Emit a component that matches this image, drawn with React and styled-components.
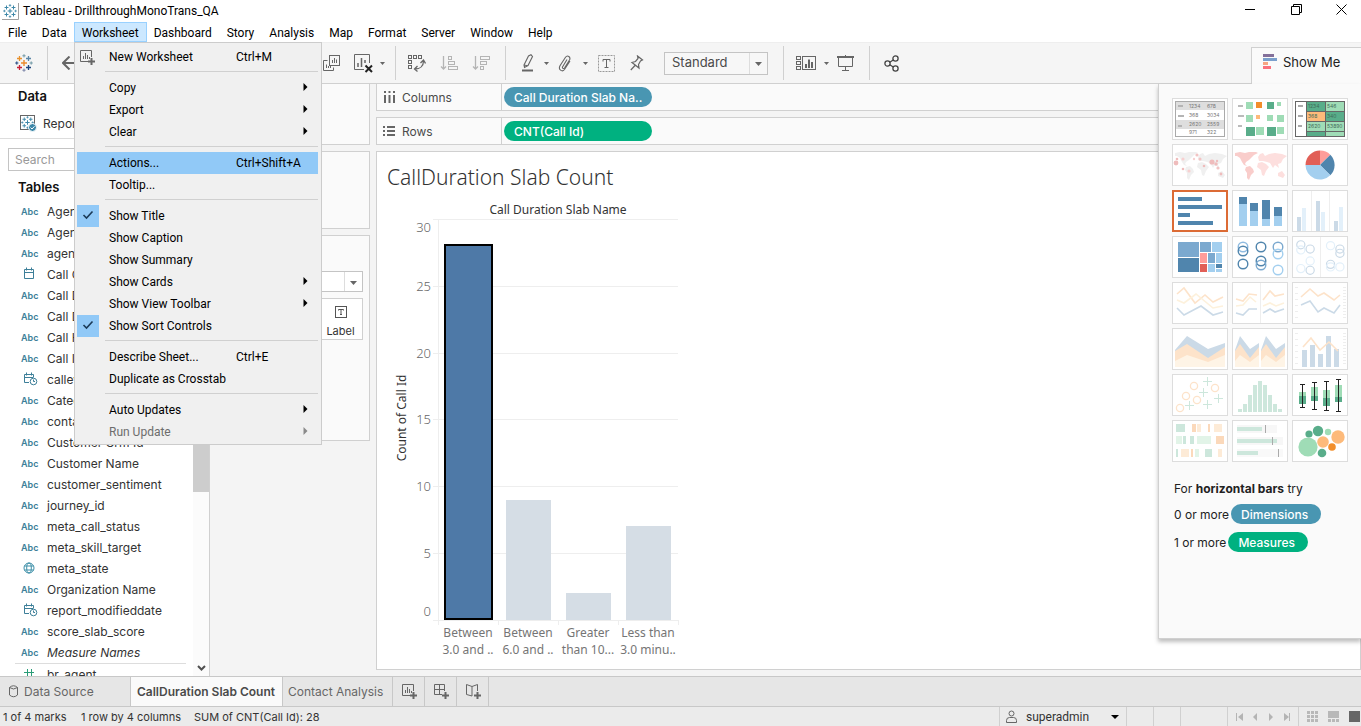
import React from 'react'
import styled, {createGlobalStyle, css} from 'styled-components'

const ui = 'Roboto, "Open Sans", sans-serif'
const book = 'Inter, Roboto, sans-serif'
const light = '"Noto Sans", "Open Sans", sans-serif'

const line = '#d0d0d0'
const ink = '#333333'
const iconGrey = '#666666'
const dimension = '#4996b2'
const measure = '#00b180'

const GlobalStyle = createGlobalStyle`
    * {box-sizing: border-box;}
    body {margin: 0; overflow: hidden;}
    button, input, select {font: inherit; color: inherit; margin: 0;}
    button {background: none; border: 0; padding: 0;}
    svg {display: block; flex: none;}
`

const Window = styled.div`
    height: 100vh;
    display: flex;
    flex-direction: column;
    background-color: #ffffff;
    color: ${ink};
    font-family: ${book};
    font-size: 12px;
`

/* ---------- title and menu bar ---------- */

const TitleBar = styled.header`
    height: 22px;
    display: flex;
    align-items: center;
    padding-left: 2px;
    font-family: ${ui};
    color: #000000;
`

const WindowTitle = styled.h1`
    margin: 0 auto 0 4px;
    font-size: 12px;
    font-weight: 400;
    line-height: 22px;
`

const WindowButton = styled.button`
    align-self: flex-start;
    width: ${props => props.$last ? 42 : 46}px;
    height: 18px;
    padding-left: ${props => props.$last ? 2 : 0}px;
    display: flex;
    align-items: center;
    justify-content: center;
`

const MenuBar = styled.nav`
    position: relative;
    height: 20px;
    display: flex;
    padding-left: 1px;
    font-family: ${ui};
    color: #000000;
`

const MenuTitle = styled.button`
    height: 20px;
    padding: 0 7px;
    border: 1px solid transparent;
    border-left-width: 0;
    line-height: 20px;
    ${props => props.$open && css`
        background-color: #cce8ff;
        border-color: #99d1ff;
        box-shadow: -1px 0 0 #99d1ff;
    `}
`

const DropMenu = styled.div`
    position: absolute;
    top: 20px;
    left: 74px;
    z-index: 5;
    width: 248px;
    padding: 3px 3px 1px 2px;
    border: 1px solid #cccccc;
    background-color: #f0f0f0;
`

const MenuItem = styled.button`
    width: 100%;
    height: 22px;
    display: grid;
    grid-template-columns: 22px 127px 1fr 15px;
    align-items: center;
    text-align: left;
    line-height: 22px;
    background-color: ${props => props.$active ? '#91c9f7' : 'transparent'};
    color: ${props => props.disabled ? '#6d6d6d' : '#000000'};
`

const MenuMark = styled.span`
    width: 22px;
    height: 22px;
    display: flex;
    align-items: center;
    justify-content: center;
    background-color: ${props => props.$checked ? '#91c9f7' : 'transparent'};
`

const MenuLabel = styled.span`
    padding-left: 10px;
    white-space: nowrap;
`

const MenuShortcut = styled.span`
    padding-left: 10px;
    white-space: nowrap;
`

const MenuRule = styled.hr`
    height: 1px;
    margin: 3px 0 5px 28px;
    border: 0;
    background-color: ${line};
`

/* ---------- toolbar ---------- */

const Toolbar = styled.div`
    height: 42px;
    display: flex;
    align-items: center;
    background-color: #f5f5f5;
    border-top: 1px solid #eeeeee;
    border-bottom: 1px solid ${line};
`

const ToolGroup = styled.div`
    display: flex;
    align-items: center;
    height: 34px;
    padding: 0 ${props => props.$right || 0}px 0 ${props => props.$left || 0}px;
    min-width: ${props => props.$min || 0}px;
    border-right: 1px solid ${props => props.$open ? 'transparent' : line};
`

const Tool = styled.button`
    width: ${props => props.$wide ? 32 : 30}px;
    height: 30px;
    display: flex;
    align-items: center;
    justify-content: center;
    margin-left: ${props => props.$push ? 'auto' : 0};
`

const ToolCaret = styled.button`
    width: ${props => props.$wide ? 10 : 8}px;
    height: 30px;
    display: flex;
    align-items: center;
    justify-content: center;
`

const SelectBox = styled.label`
    position: relative;
    display: flex;
    height: ${props => props.$small ? 21 : 23}px;
    width: ${props => props.$small ? '100%' : '104px'};
    border: 1px solid #c4c4c4;
    background-color: ${props => props.$small ? '#ffffff' : '#f7f7f7'};
    select {
        flex: 1;
        appearance: none;
        border: 0;
        outline: 0;
        background: none;
        padding: 0 18px 2px 7px;
        font-size: 13px;
        color: #4a4a4a;
    }
    svg {
        position: absolute;
        right: 5px;
        top: 9px;
        pointer-events: none;
    }
    &:after {
        content: '';
        position: absolute;
        top: 0;
        bottom: 0;
        right: 17px;
        border-left: 1px solid #dddddd;
    }
`

const ShowMeTab = styled.button`
    align-self: flex-end;
    display: flex;
    align-items: center;
    gap: 5px;
    width: 110px;
    height: 37px;
    margin: 0 0 -1px auto;
    padding: 0 0 8px 11px;
    border: solid ${line};
    border-width: 1px 0 0 1px;
    background-color: #fafafa;
    font-size: 13px;
    color: #222222;
    white-space: nowrap;
`

/* ---------- body ---------- */

const Body = styled.main`
    position: relative;
    flex: 1;
    min-height: 0;
    display: flex;
    background-color: #f4f4f4;
`

const DataPane = styled.aside`
    width: 210px;
    display: flex;
    flex-direction: column;
    background-color: #ffffff;
    border-right: 1px solid ${line};
`

const PaneTitle = styled.h2`
    margin: 0;
    padding: ${props => props.$first ? '2px 0 2px 18px' : '6px 0 2px 18px'};
    font-size: 13px;
    font-weight: 600;
    line-height: 21px;
    color: #111111;
`

const SourceRow = styled.div`
    display: flex;
    align-items: center;
    gap: 6px;
    height: 30px;
    padding: 0 0 0 20px;
    border-bottom: 1px solid #dddddd;
`

const SearchInput = styled.input`
    width: 160px;
    height: 23px;
    margin: 9px 0 0 8px;
    padding: 0 6px;
    border: 1px solid #c4c4c4;
    &::placeholder {color: #999999; opacity: 1;}
`

const FieldArea = styled.div`
    flex: 1;
    min-height: 0;
    display: flex;
`

const FieldList = styled.ul`
    flex: 1;
    margin: 0;
    padding: 1px 0 0;
    overflow: hidden;
    list-style: none;
`

const Field = styled.li`
    height: 21px;
    display: grid;
    grid-template-columns: 26px 1fr;
    align-items: center;
    padding: 0 0 1px 21px;
    white-space: nowrap;
    font-style: ${props => props.$italic ? 'italic' : 'normal'};
`

const FieldRule = styled.li`
    height: 1px;
    margin: 0 7px 0 15px;
    background-color: #dddddd;
`

const Abc = styled.span`
    font-size: 9px;
    font-weight: 600;
    font-style: normal;
    color: #3d7f99;
`

const FieldIcon = styled.span`
    padding-left: 2px;
`

const ScrollTrack = styled.div`
    width: 16px;
    display: flex;
    flex-direction: column;
    justify-content: space-between;
    align-items: center;
    padding-bottom: 4px;
    background-color: #fbfbfb;
`

const ScrollThumb = styled.div`
    width: 16px;
    height: 292px;
    background-color: #cdcdcd;
`

const Cards = styled.section`
    width: 167px;
    display: flex;
    flex-direction: column;
    gap: 6px;
    padding: 0 7px;
`

const Card = styled.div`
    height: ${props => props.$height}px;
    border: 1px solid ${line};
    border-top-width: ${props => props.$flat ? 0 : 1}px;
    background-color: #fafafa;
`

const MarksCard = styled(Card)`
    display: flex;
    flex-direction: column;
    align-items: flex-end;
    gap: 6px;
    padding: 35px 6px 0;
`

const MarkButton = styled.button`
    width: 45px;
    height: 42px;
    display: flex;
    flex-direction: column;
    align-items: center;
    justify-content: center;
    gap: 6px;
    padding-top: 6px;
    border: 1px solid ${line};
    background-color: #ffffff;
    font-size: 11px;
`

const Workspace = styled.section`
    flex: 1;
    min-width: 0;
    display: flex;
    flex-direction: column;
    gap: 6px;
    padding-bottom: 6px;
`

const Shelf = styled.div`
    height: ${props => props.$flat ? 27 : 28}px;
    display: flex;
    border: 1px solid ${line};
    border-top-width: ${props => props.$flat ? 0 : 1}px;
    background-color: #fafafa;
    margin-left: -1px;
`

const ShelfLabel = styled.div`
    width: 125px;
    display: flex;
    align-items: center;
    gap: 6px;
    padding-left: 6px;
    border-right: 1px solid ${line};
    color: #4a4a4a;
`

const Pill = styled.button`
    height: 20px;
    padding: 0 ${props => props.$long ? 10 : 13}px 0 10px;
    min-width: ${props => props.$long ? 148 : 0}px;
    border-radius: 10px;
    background-color: ${props => props.$measure ? measure : dimension};
    color: #ffffff;
    text-align: left;
    white-space: nowrap;
    font-weight: 500;
    line-height: 19px;
`

const ShelfDrop = styled.div`
    display: flex;
    align-items: center;
    padding-left: 2px;
`

const Sheet = styled.div`
    flex: 1;
    min-height: 0;
    margin-left: -1px;
    padding: 11px 10px 0;
    border: 1px solid ${line};
    background-color: #ffffff;
`

const SheetTitle = styled.h2`
    margin: 0;
    font-family: ${light};
    font-size: 21px;
    font-weight: 300;
    line-height: 28px;
    color: #333333;
`

const Chart = styled.svg`
    margin: 9px 0 0 1px;
    font-family: ${light};
    font-size: 12px;
`

const TickText = styled.text`
    fill: #666666;
    font-size: 13px;
    font-weight: 300;
`

const CategoryText = styled.text`
    fill: #757575;
    font-size: 12px;
    text-anchor: middle;
`

const AxisText = styled.text`
    fill: #333333;
    text-anchor: middle;
`

/* ---------- show me ---------- */

const ShowMePanel = styled.aside`
    position: absolute;
    top: 0;
    right: 0;
    width: 203px;
    padding: 14px 13px 82px;
    border: solid ${line};
    border-width: 0 0 1px 1px;
    background-color: #fafafa;
    box-shadow: 0 3px 4px rgba(0, 0, 0, .25);
`

const ThumbGrid = styled.div`
    display: grid;
    grid-template-columns: repeat(3, 56px);
    gap: 4px;
    margin-bottom: 14px;
`

const Thumb = styled.button`
    width: 56px;
    height: 42px;
    background-color: #ffffff;
    box-shadow: inset 0 0 0 ${props => props.$selected ? '2px #dc6b35' : '1px #dddddd'};
`

const Hint = styled.p`
    display: flex;
    align-items: center;
    gap: 2px;
    height: ${props => props.$head ? 24 : 28}px;
    margin: 0 0 0 2px;
    color: #222222;
    white-space: nowrap;
`

/* ---------- tabs and status ---------- */

const TabBar = styled.nav`
    height: 31px;
    display: flex;
    border: solid #c8c8c8;
    border-width: 1px 0;
    background-color: #e6e6e6;
`

const SheetTab = styled.button`
    display: flex;
    align-items: center;
    gap: 6px;
    width: ${props => props.$width}px;
    padding-left: ${props => props.$pad}px;
    border-right: 1px solid #c8c8c8;
    background-color: ${props => props.$active ? '#fafafa' : 'transparent'};
    color: ${props => props.$active ? '#4a4a4a' : '#666666'};
    font-weight: ${props => props.$active ? 600 : 400};
    white-space: nowrap;
`

const StatusBar = styled.footer`
    height: 19px;
    display: flex;
    align-items: stretch;
    background-color: #ebebeb;
    font-size: 11px;
    line-height: 20px;
`

const StatusText = styled.span`
    padding-left: 3px;
    min-width: ${props => props.$min}px;
    white-space: nowrap;
`

const StatusCell = styled.div`
    display: flex;
    align-items: center;
    justify-content: space-between;
    width: ${props => props.$width}px;
    padding: 0 ${props => props.$right || 0}px 0 ${props => props.$left || 0}px;
    border-left: 1px solid ${line};
    margin-left: ${props => props.$push ? 'auto' : 0};
`

const UserName = styled.span`
    margin: 0 auto 0 9px;
    font-family: ${ui};
    font-size: 12px;
`

/* ---------- icons ---------- */

const Icon = ({w = 18, h = 18, children, color = iconGrey, ...rest}) => (
    <svg width={w} height={h} viewBox={`0 0 ${w} ${h}`} fill="none" stroke={color} aria-hidden="true" {...rest}>
        {children}
    </svg>
)

const Plus = ({x, y, r, c, s = 1}) => (
    <path d={`M${x - r} ${y}H${x + r}M${x} ${y - r}V${y + r}`} stroke={c} strokeWidth={s}/>
)

const Caret = ({w = 5, color = iconGrey}) => (
    <svg width={w} height={Math.ceil(w / 2)} viewBox="0 0 6 3" preserveAspectRatio="none" aria-hidden="true">
        <path d="M0 0H6L3 3Z" fill={color}/>
    </svg>
)

const logoColors = ['#eb8b2d', '#e8912d', '#5c87a8', '#c72037', '#1f457e', '#7199a6', '#7b84a8', '#1f457e', '#7099a6']

const Logo = ({size = 18, mono}) => {
    const c = mono ? logoColors.map(() => '#3d87a8') : logoColors
    return (
        <svg width={size} height={size} viewBox="0 0 18 18" aria-hidden="true">
            <Plus x={9} y={9} r={3} c={c[0]} s={1.4}/>
            <Plus x={4.5} y={4.5} r={2.5} c={c[1]} s={1.3}/>
            <Plus x={13.5} y={4.5} r={2.5} c={c[2]} s={1.3}/>
            <Plus x={4.5} y={13.5} r={2.5} c={c[3]} s={1.3}/>
            <Plus x={13.5} y={13.5} r={2.5} c={c[4]} s={1.3}/>
            <Plus x={9} y={1.8} r={1.6} c={c[5]}/>
            <Plus x={9} y={16.2} r={1.6} c={c[6]}/>
            <Plus x={1.8} y={9} r={1.6} c={c[7]}/>
            <Plus x={16.2} y={9} r={1.6} c={c[8]}/>
        </svg>
    )
}

const AppIcon = () => (
    <svg width="17" height="17" viewBox="0 0 17 17" aria-hidden="true">
        <path d="M0 16.5H16.5V0" fill="none" stroke="#a0a0a0"/>
        <svg x="1" y="1" width="14" height="14" viewBox="0 0 18 18"><Logo mono/></svg>
    </svg>
)

const SourceIcon = () => (
    <Icon w={17} h={17}>
        <rect x="0.5" y="0.5" width="14" height="14"/>
        <svg x="1" y="1" width="13" height="13" viewBox="0 0 18 18"><Logo mono/></svg>
        <circle cx="12.5" cy="12.5" r="4" fill="#3d87a8" stroke="#ffffff"/>
        <path d="M10.5 12.5L12 14L14.5 11.3" stroke="#ffffff"/>
    </Icon>
)

const NewSheetIcon = () => (
    <Icon w={16} h={15}>
        <path d="M10 11.5H0.5V0.5H11.5V7"/>
        <path d="M3.5 9V6M5.5 9V3M7.5 9V5M9.5 9V7"/>
        <path d="M8 11.5H15M11.5 8V15" strokeWidth="2"/>
    </Icon>
)

const NewDashboardIcon = () => (
    <Icon w={16} h={15}>
        <path d="M8 10.5H0.5V0.5H10.5V7M0.5 5.5H10.5M5.5 0.5V10.5"/>
        <path d="M8 11.5H15M11.5 8V15" strokeWidth="2"/>
    </Icon>
)

const NewStoryIcon = () => (
    <Icon w={16} h={15}>
        <path d="M6 12L0.5 10.5V0.5L6 2.5L11.5 0.5V7M6 2.5V12"/>
        <path d="M8 11.5H15M11.5 8V15" strokeWidth="2"/>
    </Icon>
)

const DuplicateIcon = () => (
    <Icon w={18} h={16}>
        <rect x="6.5" y="0.5" width="10" height="10"/>
        <path d="M4.5 5.5H0.5V15.5H10.5V12.5M9.5 8V5M11.5 8V3M13.5 8V4.5M3.5 13V9.5M5.5 13V11M7.5 13V11"/>
    </Icon>
)

const ClearIcon = () => (
    <Icon w={19} h={19}>
        <path d="M10 15.5H0.5V0.5H15.5V9"/>
        <path d="M4 13V9M7.5 13V4M11 9V6" strokeWidth="1.5"/>
        <path d="M11.5 11.5L18 18M18 11.5L11.5 18" stroke="#222222" strokeWidth="2"/>
    </Icon>
)

const SwapIcon = () => (
    <Icon w={18} h={18}>
        <rect x="0.5" y="1.5" width="3" height="3"/>
        <rect x="5.5" y="1.5" width="3" height="3"/>
        <rect x="10.5" y="1.5" width="3" height="3"/>
        <rect x="0.5" y="6.5" width="3" height="3"/>
        <rect x="0.5" y="11.5" width="3" height="3"/>
        <path d="M15.5 7C15.5 12 12 15 7 15M12.5 9L15.5 6L17.5 9.5M9.5 12L6.5 15L9.5 17.5" strokeWidth="1.3"/>
    </Icon>
)

const SortIcon = ({desc}) => (
    <Icon w={18} h={16} color="#b4b4b4">
        <path d="M3.5 1V14M1 11.5L3.5 14L6 11.5" strokeWidth="1.3"/>
        <rect x="8.5" y="1.5" width={desc ? 9 : 3} height="3"/>
        <rect x="8.5" y="6.5" width="6" height="3"/>
        <rect x="8.5" y="11.5" width={desc ? 3 : 9} height="3"/>
    </Icon>
)

const HighlightIcon = () => (
    <Icon w={13} h={18}>
        <path d="M3 11L7.5 2L10 0.8L11.5 2.5L7 11.5L3.5 13.5ZM3 11L6.8 11.8" strokeWidth="1.1"/>
        <path d="M1 16.5H12" strokeWidth="2"/>
    </Icon>
)

const ClipIcon = () => (
    <Icon w={14} h={17}>
        <path d="M9 4.5L4.5 12C4 13.5 5.8 14 6.5 13L11.5 5C13 2 9.5 -0.5 7.5 2.3L2 10.8C0 14.5 4 17.5 6.5 14.5L12 6" strokeWidth="1.1"/>
    </Icon>
)

const TextIcon = ({size = 17, solid}) => (
    <Icon w={size} h={size} color={solid ? '#555555' : '#999999'}>
        <rect x="0.5" y="0.5" width={size - 1} height={size - 1} strokeDasharray={solid ? undefined : '2 1'}/>
        {solid
            ? <path d="M3.5 4.5V3.5H8.5V4.5M6 3.5V8.5M5 8.5H7"/>
            : <path d="M5 6.5V4.5H12V6.5M8.5 4.5V12.5M6.5 12.5H10.5" stroke={iconGrey}/>}
    </Icon>
)

const PinIcon = () => (
    <Icon w={14} h={16}>
        <path d="M7.5 1L12.5 5L10.5 6L8.5 9.5L9 13L2 7.5L5.5 6.5L8 3.5ZM5 10.5L0.8 15" strokeWidth="1.2"/>
    </Icon>
)

const ShowCardsIcon = () => (
    <Icon w={20} h={15}>
        <rect x="0.5" y="0.5" width="4" height="3"/>
        <rect x="0.5" y="5.5" width="4" height="3"/>
        <rect x="0.5" y="10.5" width="4" height="3"/>
        <rect x="6.5" y="0.5" width="13" height="13"/>
        <path d="M10 12V8M13 12V3.5M16 12V6" strokeWidth="2"/>
    </Icon>
)

const PresentIcon = () => (
    <Icon w={17} h={17}>
        <path d="M0 2H17" strokeWidth="2"/>
        <path d="M1.5 2V11.5H15.5V2M8.5 0V1M8.5 11.5V15.5M5 15.5H12"/>
    </Icon>
)

const ShareIcon = () => (
    <Icon w={16} h={17} color="#444444">
        <circle cx="3.5" cy="8.5" r="2.6" strokeWidth="1.3"/>
        <circle cx="11.5" cy="3.5" r="2.6" strokeWidth="1.3"/>
        <circle cx="11.5" cy="13.5" r="2.6" strokeWidth="1.3"/>
        <path d="M5.8 7.2L9.2 5M5.8 9.8L9.2 12" strokeWidth="1.3"/>
    </Icon>
)

const ShowMeIcon = () => (
    <svg width="15" height="16" viewBox="0 0 15 16" aria-hidden="true">
        <rect y="0" width="11" height="3" fill="#84709a"/>
        <rect y="4" width="14" height="3" fill="#7ba0cc"/>
        <rect y="8" width="5" height="3" fill="#f6a582"/>
        <rect y="12" width="8" height="3" fill="#f9717d"/>
    </svg>
)

const CalendarIcon = ({time}) => (
    <Icon w={15} h={14} color="#3d7f99">
        <path d={time ? 'M6 10.5H1.5V2.5H10.5V5M1.5 5.5H10.5M3.5 0.5V3.5M8.5 0.5V3.5' : 'M1.5 2.5H10.5V11.5H1.5ZM1.5 5.5H10.5M3.5 0.5V3.5M8.5 0.5V3.5'}/>
        {time && <><circle cx="10.5" cy="9.5" r="3.3"/><path d="M10.5 7.5V9.5H12"/></>}
    </Icon>
)

const GlobeIcon = () => (
    <Icon w={12} h={12} color="#3d8fa8">
        <circle cx="6" cy="6" r="5"/>
        <ellipse cx="6" cy="6" rx="2.3" ry="5"/>
        <path d="M1.5 4H10.5M1.5 8H10.5"/>
    </Icon>
)

const Check = () => (
    <Icon w={12} h={12} color="#1b3a57"><path d="M1.5 5L4.5 8L10.5 1.5" strokeWidth="1.6"/></Icon>
)

const SubArrow = ({off}) => (
    <svg width="5" height="10" viewBox="0 0 5 10" aria-hidden="true">
        <path d="M0.5 0L4.5 4L0.5 8Z" fill={off ? '#8a8a8a' : '#000000'}/>
    </svg>
)

/* ---------- show me thumbnails ---------- */

const Bars = ({data, fill}) => data.map(([x, y, w, h, c], i) => (
    <rect key={i} x={x} y={y} width={w} height={h} fill={c || fill}/>
))

const Lines = ({data}) => data.map(([points, c], i) => (
    <polyline key={i} points={points} fill="none" stroke={c} strokeWidth="1.6"/>
))

const Areas = ({data}) => data.map(([points, c], i) => <polygon key={i} points={points} fill={c}/>)

const Rings = ({data}) => data.map(([x, y, c], i) => (
    <circle key={i} cx={x} cy={y} r="4.8" fill="none" stroke={c} strokeWidth="1.4"/>
))

const Dots = ({data}) => data.map(([x, y, r, c], i) => <circle key={i} cx={x} cy={y} r={r} fill={c}/>)

const tinyNumbers = [['1234', '678'], ['368', '3034'], ['2620', '2559'], ['971', '322']]
const heatNumbers = [['1234', '546'], ['368', '340'], ['2620', '53890']]

const TextTable = () => (
    <g fontSize="5" fill="#777777" fontFamily={book}>
        <rect x="3.5" y="3.5" width="49" height="35" fill="#ffffff" stroke="#aaaaaa"/>
        <Bars fill="#dedede" data={[[4, 4, 48, 8], [4, 22, 48, 9]]}/>
        <Bars fill="#b4b4b4" data={[[6, 7, 5, 2], [6, 17, 6, 2], [6, 27, 4, 2]]}/>
        {tinyNumbers.map(([a, b], i) => (
            <React.Fragment key={a}>
                <text x="17" y={10 + i * 9 - (i === 3 ? 1 : 0)}>{a}</text>
                <text x="35" y={10 + i * 9 - (i === 3 ? 1 : 0)}>{b}</text>
            </React.Fragment>
        ))}
    </g>
)

const HighlightTable = () => (
    <g fontSize="5" fill="#3f6b58" fontFamily={book}>
        <rect x="3.5" y="3.5" width="49" height="35" fill="#ffffff" stroke="#666666"/>
        <Bars data={[
            [15, 4, 18, 9, '#59ad8a'], [34, 4, 18, 9, '#9fdcb6'], [15, 14, 18, 9, '#fdba7a'], [34, 14, 18, 9, '#59ad8a'],
            [15, 24, 18, 9, '#9fdcb6'], [34, 24, 18, 9, '#9fdcb6'], [15, 34, 18, 4, '#59ad8a'], [34, 34, 18, 4, '#9fdcb6'],
            [6, 7, 5, 2, '#aaaaaa'], [6, 17, 5, 2, '#aaaaaa'], [6, 27, 4, 2, '#aaaaaa']
        ]}/>
        <path d="M14.5 4V38M33.5 4V38M14 13.5H52M14 23.5H52M14 33.5H52" stroke="#666666"/>
        {heatNumbers.map(([a, b], i) => (
            <React.Fragment key={a}>
                <text x="16" y={10 + i * 10}>{a}</text>
                <text x="35" y={10 + i * 10}>{b}</text>
            </React.Fragment>
        ))}
    </g>
)

const continents = [
    'M3 9L8 8L13 9L17 8L24 8L26 9L22 11L20 13L17 16L14 18L13 20L15 22L12 21L10 18L8 14L5 12L3 12Z',
    'M14 23L18 22L21 25L22 28L19 31L17 36L15 34L15 29L13 26Z',
    'M26 13L28 10L31 9L33 12L37 10L43 9L50 10L55 12L51 15L49 19L46 20L47 24L43 21L41 24L38 19L35 18L31 17L27 17Z',
    'M26 19L30 18L34 20L37 23L34 27L32 32L30 31L29 26L25 23Z',
    'M46 29L50 27L53 31L51 34L46 32Z'
]

const WorldMap = ({left, right}) => continents.map((d, i) => (
    <path key={d} d={d} fill={i < 2 ? left : right}/>
))

const pale = {blue: '#cbdae7', sky: '#e3f0fa', orange: '#fde3ca', cream: '#fdf1dc', green: '#cde7dc', mint: '#e2f4e8'}

const thumbs = [
    {name: 'Text table', art: <TextTable/>},
    {name: 'Heat map', art: <Bars data={[
        [6, 7, 5, 2, '#bbbbbb'], [6, 17, 6, 2, '#bbbbbb'], [6, 27, 4, 2, '#bbbbbb'],
        [14, 4, 7, 7, '#9fdcb6'], [24, 4, 6, 6, '#f28e2b'], [35, 4, 7, 7, '#59ad8a'], [45, 4, 4, 4, '#9fdcb6'],
        [14, 17, 7, 7, '#9fdcb6'], [24, 17, 4, 4, '#fdba7a'], [35, 17, 6, 6, '#9fdcb6'], [45, 17, 7, 7, '#9fdcb6'],
        [14, 29, 9, 9, '#59ad8a'], [24, 29, 8, 8, '#9fdcb6'], [35, 29, 9, 9, '#59ad8a'], [45, 29, 7, 7, '#9fdcb6']
    ]}/>},
    {name: 'Highlight table', art: <HighlightTable/>},
    {name: 'Symbol map', art: <><WorldMap left="#f0f0f0" right="#f0f0f0"/><Dots data={[
        [4, 19, 2.4, '#efbcbc'], [5, 15, 1.3, '#efbcbc'], [11, 15, 1.6, '#f7d0d0'], [11, 25, 1.3, '#efbcbc'], [17, 27, 1.6, '#f7d0d0'],
        [25, 11, 1.6, '#f2c4c4'], [22, 15, 1.2, '#f7d0d0'], [28, 15, 1.6, '#f2c4c4'], [32, 22, 1.3, '#efbcbc'],
        [40, 18, 2.6, '#efbcbc'], [44, 20, 1.7, '#efbcbc'], [46, 24, 1.6, '#f2c4c4'], [49, 30, 1.4, '#efbcbc'], [45, 17, 1.2, '#efbcbc']
    ]}/></>},
    {name: 'Map', art: <WorldMap left="#f9cdcb" right="#fddfde"/>},
    {name: 'Pie chart', art: <>
        <path d="M28 21V6.5A14.5 14.5 0 0 1 38.3 10.7Z" fill="#ff9d9a"/>
        <path d="M28 21L38.3 10.7A14.5 14.5 0 0 1 38.3 31.3Z" fill="#5085ad"/>
        <path d="M28 21L38.3 31.3A14.5 14.5 0 0 1 13.5 21Z" fill="#a3cfef"/>
        <path d="M28 21H13.5A14.5 14.5 0 0 1 28 6.5Z" fill="#e15f57"/>
    </>},
    {name: 'Horizontal bars', selected: true, art: <Bars fill="#5085ad" data={[[6, 7, 24, 4], [6, 15, 44, 4], [6, 23, 12, 4], [6, 31, 35, 4]]}/>},
    {name: 'Stacked bars', art: <Bars data={[
        [7, 7, 8, 7, '#5085ad'], [7, 14, 8, 22, '#a3cfef'], [18, 13, 8, 8, '#5085ad'], [18, 21, 8, 15, '#a3cfef'],
        [30, 10, 8, 19, '#5085ad'], [30, 29, 8, 7, '#a3cfef'], [42, 17, 8, 9, '#5085ad'], [42, 26, 8, 10, '#a3cfef']
    ]}/>},
    {name: 'Side-by-side bars', art: <Bars data={[
        [19, 1, 1, 40, '#eeeeee'], [37, 1, 1, 40, '#eeeeee'],
        [5, 27, 4, 14, pale.blue], [10, 18, 4, 23, pale.sky], [24, 11, 4, 30, pale.blue], [29, 22, 4, 19, pale.sky],
        [42, 31, 4, 10, pale.blue], [47, 17, 4, 24, pale.sky]
    ]}/>},
    {name: 'Treemap', art: <Bars data={[
        [6, 6, 21, 15, '#7ba9cf'], [6, 22, 21, 14, '#5085ad'], [28, 6, 11, 10, '#7ba9cf'], [40, 6, 10, 10, '#a3cfef'],
        [28, 17, 7, 10, '#ff9d9a'], [36, 17, 7, 10, '#7ba9cf'], [44, 17, 6, 10, '#a3cfef'], [28, 28, 7, 8, '#e15f57'],
        [36, 28, 7, 8, '#a3cfef'], [44, 28, 6, 4, '#5085ad'], [44, 33, 6, 3, '#a3cfef']
    ]}/>},
    {name: 'Circle views', art: <Rings data={[
        [11, 11, '#8fbbe0'], [11, 15, '#5085ad'], [11, 28, '#5085ad'], [29, 11, '#5085ad'], [29, 25, '#5085ad'], [29, 29, '#7ba9cf'],
        [46, 11, '#7ba9cf'], [46, 18, '#a3cfef'], [46, 34, '#a3cfef']
    ]}/>},
    {name: 'Side-by-side circles', art: <><Bars data={[[28, 1, 1, 40, '#eeeeee']]}/><g transform="translate(2 2) scale(.85)"><Rings data={[
        [8, 8, pale.blue], [8, 14, pale.sky], [19, 13, pale.blue], [19, 27, pale.sky], [8, 36, pale.sky], [19, 38, pale.blue],
        [43, 9, pale.sky], [54, 13, pale.blue], [54, 18, pale.blue], [43, 31, pale.blue], [43, 34, pale.sky], [54, 34, pale.sky]
    ]}/></g></>},
    {name: 'Continuous lines', art: <Lines data={[
        ['5,12 12,6 23,21 33,13 41,20 51,15', pale.orange], ['5,18 12,21 24,12 41,26 51,24', pale.cream], ['5,26 12,33 29,24 41,33 51,30', pale.blue]
    ]}/>},
    {name: 'Discrete lines', art: <><Bars data={[[28, 1, 1, 40, '#eeeeee']]}/><Lines data={[
        ['4,17 11,19 17,12 25,13', pale.orange], ['4,24 11,23 18,15 24,20', pale.cream], ['4,31 11,33 17,27 25,27', pale.blue],
        ['31,18 38,9 43,14 52,12', pale.orange], ['31,24 38,21 44,24 52,21', pale.cream], ['31,31 38,27 43,30 52,27', pale.blue]
    ]}/></>},
    {name: 'Dual lines', art: <>
        <Bars fill="#eeeeee" data={[5, 11, 17, 23, 29, 35].map(y => [3, y, 3, 1])}/>
        <Bars fill="#eeeeee" data={[5, 8, 11, 14, 17, 20, 23, 26, 29, 32, 35].map(y => [51, y, 3, 1])}/>
        <Lines data={[['9,15 18,7 26,14 32,11 42,18 48,13', pale.orange], ['9,23 18,19 26,30 32,26 42,31 48,23', pale.blue]]}/>
    </>},
    {name: 'Continuous area', art: <Areas data={[
        ['3,22 15,8 36,21 53,15 53,39 3,39', pale.blue], ['3,23 15,16 36,30 53,19 53,39 3,39', pale.orange], ['3,33 15,27 36,34 53,27 53,39 3,39', '#fef4e6']
    ]}/>},
    {name: 'Discrete area', art: [0, 26].map(x => (
        <g key={x} transform={`translate(${x} 0)`}>
            <Areas data={[
                ['3,22 8,8 18,21 27,15 27,39 3,39', pale.blue], ['3,23 8,16 18,30 27,19 27,39 3,39', pale.orange], ['3,33 8,27 18,34 27,27 27,39 3,39', '#fef4e6']
            ]}/>
            <rect x="27" y="2" width="2" height="38" fill="#ffffff"/>
        </g>
    ))},
    {name: 'Dual combination', art: <>
        <Bars fill="#eeeeee" data={[5, 11, 17, 23, 29, 35].map(y => [3, y, 3, 1])}/>
        <Bars fill="#eeeeee" data={[5, 8, 11, 14, 17, 20, 23, 26, 29, 32, 35].map(y => [51, y, 3, 1])}/>
        <Bars fill={pale.blue} data={[[10, 22, 5, 17], [18, 17, 5, 22], [26, 26, 5, 13], [34, 8, 5, 31], [42, 21, 5, 18]]}/>
        <Lines data={[['11,19 19,10 28,22 37,14 46,23', pale.orange]]}/>
    </>},
    {name: 'Scatter plot', art: <>
        {[[22, 12], [43, 14], [14, 22], [25, 26], [8, 34]].map(([x, y]) => (
            <circle key={x} cx={x} cy={y} r="3.6" fill="none" stroke={pale.orange} strokeWidth="1.3"/>
        ))}
        {[[35, 7], [31, 18], [46, 24], [17, 31], [35, 30]].map(([x, y]) => (
            <Plus key={y} x={x + 0.5} y={y + 0.5} r={4.5} c={pale.green}/>
        ))}
    </>},
    {name: 'Histogram', art: <Bars fill={pale.green} data={[
        [6, 35, 4, 3], [11, 30, 4, 8], [16, 21, 4, 17], [21, 11, 4, 27], [26, 7, 4, 31], [31, 11, 4, 27], [36, 21, 4, 17], [41, 30, 4, 8], [46, 35, 4, 3]
    ]}/>},
    {name: 'Box-and-whisker plot', art: <>
        <Bars data={[
            [7, 18, 7, 4, '#9fdcb6'], [7, 22, 7, 8, '#59ad8a'], [19, 13, 7, 9, '#9fdcb6'], [19, 22, 7, 5, '#59ad8a'],
            [31, 16, 7, 8, '#9fdcb6'], [31, 24, 7, 8, '#59ad8a'], [43, 11, 7, 12, '#9fdcb6'], [43, 23, 7, 5, '#59ad8a']
        ]}/>
        <path d="M10.5 10V33M8 10.5H13M8 33.5H13M22.5 8V35M20 8.5H25M20 35.5H25M34.5 7V36M32 7.5H37M32 36.5H37M46.5 5V37M44 5.5H49M44 37.5H49" stroke="#222222"/>
    </>},
    {name: 'Gantt chart', art: <Bars data={[
        [4, 4, 9, 8, pale.green], [20, 4, 4, 8, '#fbd9bb'], [25, 4, 4, 8, '#fdebd7'], [36, 4, 2, 8, '#fbd9bb'], [42, 4, 8, 8, '#fdebd7'],
        [4, 16, 6, 8, pale.mint], [11, 16, 3, 8, pale.green], [18, 16, 4, 8, pale.green], [25, 16, 14, 8, pale.mint], [44, 16, 8, 8, '#fbd9bb'],
        [4, 29, 2, 8, pale.green], [9, 29, 8, 8, '#fdebd7'], [19, 29, 2, 8, '#fbd9bb'], [23, 29, 4, 8, pale.mint], [33, 29, 7, 8, pale.green], [46, 29, 4, 8, '#fdebd7']
    ]}/>},
    {name: 'Bullet graph', art: <Bars data={[
        [5, 5, 40, 8, '#f7f7f7'], [5, 17, 46, 8, '#f7f7f7'], [5, 29, 46, 8, '#f9f9f9'],
        [5, 7, 25, 4, pale.green], [5, 19, 40, 4, pale.green], [5, 31, 21, 4, pale.green],
        [33, 5, 1, 8, '#aaaaaa'], [40, 17, 1, 8, '#aaaaaa'], [46, 29, 1, 8, '#aaaaaa']
    ]}/>},
    {name: 'Packed bubbles', art: <Dots data={[
        [16, 27, 9.6, '#9fdcb6'], [17, 14, 3.6, '#59ad8a'], [26, 11, 5.2, '#59ad8a'], [36, 12, 3.2, '#9fdcb6'], [46, 17, 6.7, '#fdba7a'],
        [31, 22, 5.8, '#fdba7a'], [40, 27, 3.8, '#f28e2b'], [30, 33, 4.3, '#59ad8a']
    ]}/>}
]

/* ---------- data ---------- */

const menus = ['File', 'Data', 'Worksheet', 'Dashboard', 'Story', 'Analysis', 'Map', 'Format', 'Server', 'Window', 'Help']

const worksheetMenu = [
    [{label: 'New Worksheet', keys: 'Ctrl+M', icon: <NewSheetIcon/>}],
    [{label: 'Copy', sub: true}, {label: 'Export', sub: true}, {label: 'Clear', sub: true}],
    [{label: 'Actions...', keys: 'Ctrl+Shift+A', active: true}, {label: 'Tooltip...'}],
    [
        {label: 'Show Title', checked: true}, {label: 'Show Caption'}, {label: 'Show Summary'}, {label: 'Show Cards', sub: true},
        {label: 'Show View Toolbar', sub: true}, {label: 'Show Sort Controls', checked: true}
    ],
    [{label: 'Describe Sheet...', keys: 'Ctrl+E'}, {label: 'Duplicate as Crosstab'}],
    [{label: 'Auto Updates', sub: true}, {label: 'Run Update', sub: true, disabled: true}]
]

const fields = [
    ['Agent Id'], ['Agent'], ['agent_id'], ['Call On', 'date'], ['Call Day'], ['Call Dir'],
    ['Call Hr'], ['Call Id'], ['callevent', 'time'], ['Category'], ['contact'], ['Customer Crm Id'], ['Customer Name'],
    ['customer_sentiment'], ['journey_id'], ['meta_call_status'], ['meta_skill_target'], ['meta_state', 'geo'],
    ['Organization Name'], ['report_modifieddate', 'time'], ['score_slab_score']
]

const fieldIcons = {
    date: <CalendarIcon/>,
    time: <CalendarIcon time/>,
    geo: <GlobeIcon/>
}

const slabs = [
    {label: ['Between', '3.0 and ..'], value: 28, selected: true},
    {label: ['Between', '6.0 and ..'], value: 9},
    {label: ['Greater', 'than 10...'], value: 2},
    {label: ['Less than', '3.0 minu..'], value: 7}
]

const BarChart = () => {
    const left = 50
    const base = 420
    const height = value => Math.round(value * 401 / 30)
    return (
        <Chart width="300" height="462" viewBox="0 0 300 462" role="img" aria-label="Count of Call Id by Call Duration Slab Name">
            <AxisText x="170" y="14">Call Duration Slab Name</AxisText>
            <AxisText transform="translate(18 218) rotate(-90)">Count of Call Id</AxisText>
            {[30, 25, 20, 15, 10, 5, 0].map(tick => {
                const y = base - height(tick)
                const shift = tick === 30 ? 13 : tick === 0 ? -4 : 5
                return (
                    <g key={tick}>
                        <rect x={left - 5} y={y} width={245} height="1" fill="#eeeeee"/>
                        <TickText x={left - 7} y={y + shift} textAnchor="end">{tick}</TickText>
                    </g>
                )
            })}
            <rect x={left} y="19" width="1" height="406" fill="#eeeeee"/>
            {slabs.map((slab, i) => {
                const x = left + 60 * i
                const h = height(slab.value)
                return (
                    <g key={slab.label[1]}>
                        <rect x={x + 60} y={base} width="1" height="5" fill="#eeeeee"/>
                        {slab.selected
                            ? <rect x={x + 7} y={base - h - 1} width="47" height={h} fill="#4e79a7" stroke="#000000" strokeWidth="2"/>
                            : <rect x={x + 8} y={base - h} width="45" height={h} fill="#d5dde5"/>}
                        <CategoryText x={x + 30} y={base + 17}>{slab.label[0]}</CategoryText>
                        <CategoryText x={x + 30} y={base + 34}>{slab.label[1]}</CategoryText>
                    </g>
                )
            })}
        </Chart>
    )
}

const WorksheetMenu = () => (
    <DropMenu role="menu">
        {worksheetMenu.map((group, i) => (
            <React.Fragment key={i}>
                {i > 0 && <MenuRule/>}
                {group.map(item => (
                    <MenuItem key={item.label} role="menuitem" $active={item.active} disabled={item.disabled}>
                        <MenuMark $checked={item.checked}>{item.checked ? <Check/> : item.icon}</MenuMark>
                        <MenuLabel>{item.label}</MenuLabel>
                        <MenuShortcut>{item.keys}</MenuShortcut>
                        {item.sub && <SubArrow off={item.disabled}/>}
                    </MenuItem>
                ))}
            </React.Fragment>
        ))}
    </DropMenu>
)

const MainToolbar = () => (
    <Toolbar>
        <ToolGroup $left={9} $right={8}>
            <Tool aria-label="Start page"><Logo/></Tool>
        </ToolGroup>
        <ToolGroup $left={6} $right={9} $min={348}>
            <Tool $wide aria-label="Undo"><Icon w={16} h={14}><path d="M16 7H1M7.5 0.5L1 7L7.5 13.5" strokeWidth="2"/></Icon></Tool>
            <Tool $push $wide aria-label="Duplicate sheet"><DuplicateIcon/></Tool>
            <Tool aria-label="Clear sheet"><ClearIcon/></Tool>
            <ToolCaret aria-label="Clear options"><Caret/></ToolCaret>
        </ToolGroup>
        <ToolGroup $left={5} $right={8}>
            <Tool $wide aria-label="Swap rows and columns"><SwapIcon/></Tool>
            <Tool $wide aria-label="Sort ascending"><SortIcon/></Tool>
            <Tool $wide aria-label="Sort descending"><SortIcon desc/></Tool>
        </ToolGroup>
        <ToolGroup $left={6} $right={14}>
            <Tool aria-label="Highlight"><HighlightIcon/></Tool>
            <ToolCaret aria-label="Highlight options"><Caret/></ToolCaret>
            <Tool aria-label="Group members"><ClipIcon/></Tool>
            <ToolCaret $wide aria-label="Group options"><Caret/></ToolCaret>
            <Tool $wide aria-label="Show mark labels"><TextIcon/></Tool>
            <Tool aria-label="Fix axes"><PinIcon/></Tool>
            <ToolGroup $left={12} $open>
                <SelectBox>
                    <select aria-label="Fit" defaultValue="Standard"><option>Standard</option></select>
                    <Caret w={7}/>
                </SelectBox>
            </ToolGroup>
        </ToolGroup>
        <ToolGroup $left={6} $right={9}>
            <Tool $wide aria-label="Show or hide cards"><ShowCardsIcon/></Tool>
            <ToolCaret aria-label="Card options"><Caret/></ToolCaret>
            <Tool aria-label="Presentation mode"><PresentIcon/></Tool>
        </ToolGroup>
        <ToolGroup $left={6} $open>
            <Tool $wide aria-label="Share"><ShareIcon/></Tool>
        </ToolGroup>
        <ShowMeTab><ShowMeIcon/>Show Me</ShowMeTab>
    </Toolbar>
)

const FieldPane = () => (
    <DataPane>
        <PaneTitle $first>Data</PaneTitle>
        <SourceRow><SourceIcon/>Reporting</SourceRow>
        <SearchInput type="text" placeholder="Search" aria-label="Search fields"/>
        <PaneTitle>Tables</PaneTitle>
        <FieldArea>
            <FieldList>
                {fields.map(([name, kind]) => (
                    <Field key={name}>
                        {kind ? <FieldIcon>{fieldIcons[kind]}</FieldIcon> : <Abc>Abc</Abc>}
                        {name}
                    </Field>
                ))}
                <Field $italic><Abc>Abc</Abc>Measure Names</Field>
                <FieldRule/>
                <Field>
                    <FieldIcon>
                        <Icon w={12} h={12} color="#2a9d78"><path d="M1 4.5H11M1 8.5H11M4.5 1V12M8.5 1V12"/></Icon>
                    </FieldIcon>
                    br_agent
                </Field>
            </FieldList>
            <ScrollTrack>
                <ScrollThumb/>
                <Icon w={9} h={8} color="#505050"><path d="M1 2L4.5 5.5L8 2" strokeWidth="2"/></Icon>
            </ScrollTrack>
        </FieldArea>
    </DataPane>
)

const ShowMe = () => (
    <ShowMePanel>
        <ThumbGrid>
            {thumbs.map(thumb => (
                <Thumb key={thumb.name} aria-label={thumb.name} $selected={thumb.selected}>
                    <svg width="56" height="42" viewBox="0 0 56 42">{thumb.art}</svg>
                </Thumb>
            ))}
        </ThumbGrid>
        <Hint $head><span>For <b>horizontal bars</b> try</span></Hint>
        <Hint>0 or more <Pill>Dimensions</Pill></Hint>
        <Hint>1 or more <Pill $measure>Measures</Pill></Hint>
    </ShowMePanel>
)

const Status = () => (
    <StatusBar>
        <StatusText $min={78}>1 of 4 marks</StatusText>
        <StatusText $min={113}>1 row by 4 columns</StatusText>
        <StatusText>SUM of CNT(Call Id): 28</StatusText>
        <StatusCell $push $width={127} $left={6} $right={7}>
            <Icon w={11} h={14}>
                <circle cx="5.5" cy="3.5" r="2.5"/>
                <path d="M0.5 12.5V10.5Q0.5 7.5 3.5 7.5H7.5Q10.5 7.5 10.5 10.5V12.5Z"/>
            </Icon>
            <UserName>superadmin</UserName>
            <Caret w={8} color="#000000"/>
        </StatusCell>
        <StatusCell $width={27}/>
        <StatusCell $width={27}/>
        <StatusCell $width={47}/>
        <StatusCell $width={71} $left={8} $right={7}>
            <svg width="55" height="8" viewBox="0 0 55 8" fill="#b4b4b4" aria-hidden="true">
                <path d="M0 0H1V8H0ZM7 0V8L2 4ZM21 0V8L17 4ZM33 0V8L37 4ZM48 0V8L53 4ZM53 0H54V8H53Z"/>
            </svg>
        </StatusCell>
        <StatusCell $width={63} $left={8}>
            <svg width="54" height="12" viewBox="0 0 54 12" aria-hidden="true">
                {[0, 4, 8].map(y => [0, 4, 8].map(x => <rect key={x + '-' + y} x={x} y={y} width="3" height="3" fill="#b8b8b8"/>))}
                <path d="M21 0H32V7H21ZM21 8H24V11H21ZM25 8H28V11H25ZM29 8H32V11H29Z" fill="#b8b8b8"/>
                <rect x="42" width="11" height="11" fill={iconGrey}/>
            </svg>
        </StatusCell>
    </StatusBar>
)

export default class App extends React.Component{

    render(){
        return(
            <Window>
                <GlobalStyle/>
                <TitleBar>
                    <AppIcon/>
                    <WindowTitle>Tableau - DrillthroughMonoTrans_QA</WindowTitle>
                    <WindowButton aria-label="Minimize">
                        <Icon w={11} h={11} color="#000000"><path d="M0 5.5H10"/></Icon>
                    </WindowButton>
                    <WindowButton aria-label="Restore">
                        <Icon w={11} h={11} color="#000000"><path d="M0.5 2.5H8.5V10.5H0.5ZM2.5 2.5V0.5H10.5V8.5H8.5"/></Icon>
                    </WindowButton>
                    <WindowButton $last aria-label="Close">
                        <Icon w={11} h={11} color="#000000"><path d="M0.5 0.5L10.5 10.5M10.5 0.5L0.5 10.5"/></Icon>
                    </WindowButton>
                </TitleBar>
                <MenuBar>
                    {menus.map(name => <MenuTitle key={name} $open={name === 'Worksheet'}>{name}</MenuTitle>)}
                    <WorksheetMenu/>
                </MenuBar>
                <MainToolbar/>
                <Body>
                    <FieldPane/>
                    <Cards>
                        <Card $flat $height={61}/>
                        <Card $height={78}/>
                        <MarksCard $height={206}>
                            <SelectBox $small>
                                <select aria-label="Mark type"><option></option></select>
                                <Caret w={7}/>
                            </SelectBox>
                            <MarkButton><TextIcon size={12} solid/>Label</MarkButton>
                        </MarksCard>
                    </Cards>
                    <Workspace>
                        <Shelf $flat>
                            <ShelfLabel>
                                <Icon w={13} h={12}><path d="M2 0V2M2 4V12M6.5 0V2M6.5 4V12M11 0V2M11 4V12" strokeWidth="2"/></Icon>
                                Columns
                            </ShelfLabel>
                            <ShelfDrop><Pill $long>Call Duration Slab Na..</Pill></ShelfDrop>
                        </Shelf>
                        <Shelf>
                            <ShelfLabel>
                                <Icon w={13} h={12}><path d="M0 2H2M4 2H12M0 6H2M4 6H12M0 10H2M4 10H12" strokeWidth="2"/></Icon>
                                Rows
                            </ShelfLabel>
                            <ShelfDrop><Pill $long $measure>CNT(Call Id)</Pill></ShelfDrop>
                        </Shelf>
                        <Sheet>
                            <SheetTitle>CallDuration Slab Count</SheetTitle>
                            <BarChart/>
                        </Sheet>
                    </Workspace>
                    <ShowMe/>
                </Body>
                <TabBar>
                    <SheetTab $width={131} $pad={9}>
                        <Icon w={9} h={13}><path d="M0.5 2.5Q4.5 -1 8.5 2.5V10Q4.5 13.5 0.5 10ZM0.5 2.5Q4.5 5.5 8.5 2.5"/></Icon>
                        Data Source
                    </SheetTab>
                    <SheetTab $width={152} $pad={6} $active>CallDuration Slab Count</SheetTab>
                    <SheetTab $width={110} $pad={5}>Contact Analysis</SheetTab>
                    <SheetTab $width={32} $pad={9} aria-label="New worksheet"><NewSheetIcon/></SheetTab>
                    <SheetTab $width={32} $pad={9} aria-label="New dashboard"><NewDashboardIcon/></SheetTab>
                    <SheetTab $width={32} $pad={9} aria-label="New story"><NewStoryIcon/></SheetTab>
                </TabBar>
                <Status/>
            </Window>
        )
    }
}
